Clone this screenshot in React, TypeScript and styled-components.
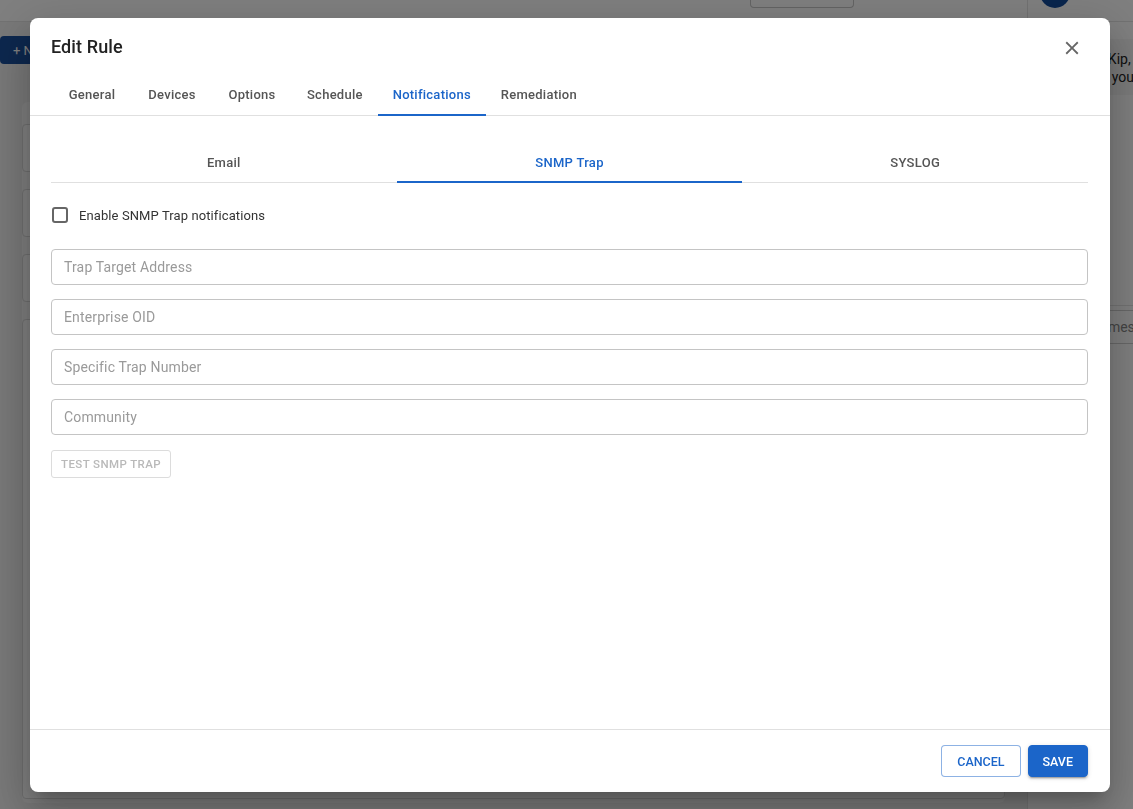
import React from "react";
import styled, { createGlobalStyle } from "styled-components";

const GlobalStyle = createGlobalStyle`
  html, body {
    margin: 0;
    padding: 0;
    height: 100%;
    overflow: hidden;
    font-family: Roboto, "Liberation Sans", Arial, sans-serif;
    background: #f0f0f0;
  }
  * { box-sizing: border-box; }
`;

const BLUE = "#1b65c9";

/* ---------- background app (dimmed behind the dialog) ---------- */

const AppShell = styled.div`
  display: flex;
  height: 100vh;
  width: 100vw;
`;

const Main = styled.div`
  flex: 1;
  display: flex;
  flex-direction: column;
`;

const TopBar = styled.div`
  height: 22px;
  background: #ffffff;
  border-bottom: 1px solid #e4e4e4;
  display: flex;
  align-items: flex-end;
  justify-content: flex-end;
  padding: 0 173px 0 0;
`;

const TopSelect = styled.div`
  width: 104px;
  height: 14px;
  border: 1px solid #c8c8c8;
  border-top: none;
  border-radius: 0 0 4px 4px;
  margin-bottom: 13px;
`;

const Toolbar = styled.div`
  height: 80px;
  padding: 14px 0 0;
`;

const NewButton = styled.div`
  width: 110px;
  height: 28px;
  background: #1a4f9c;
  color: #fff;
  border-radius: 4px;
  font-size: 13px;
  display: flex;
  align-items: center;
  padding-left: 13px;
`;

const ListCard = styled.div`
  flex: 1;
  margin: 0 22px 6px 22px;
  background: #fafafa;
  border-radius: 6px;
  padding: 22px 0 0;
  display: flex;
  flex-direction: column;
  gap: 17px;
`;

const ListRow = styled.div<{ $tall?: boolean }>`
  height: ${(p) => (p.$tall ? "480px" : "48px")};
  border: 1px solid #dcdcdc;
  border-radius: 4px;
  background: #fff;
`;

const ChatPanel = styled.div`
  width: 106px;
  background: #ffffff;
  border-left: 1px solid #e4e4e4;
  display: flex;
  flex-direction: column;
`;

const ChatHeader = styled.div`
  height: 22px;
  border-bottom: 1px solid #e4e4e4;
  padding-left: 12px;
  overflow: hidden;
`;

const Avatar = styled.div`
  width: 30px;
  height: 30px;
  border-radius: 50%;
  background: #124a9a;
  margin-top: -22px;
`;

const Bubble = styled.div`
  margin-top: 17px;
  height: 56px;
  background: #f6f6f6;
  padding: 11px 0 0 63px;
  font-size: 14px;
  line-height: 18px;
  color: #222;
  white-space: nowrap;
  overflow: hidden;
`;

const ChatInputWrap = styled.div`
  margin-top: 210px;
  padding: 0 0 0 8px;
  border-top: 1px solid #e4e4e4;
  height: 42px;
  display: flex;
  align-items: center;
`;

const ChatInput = styled.div`
  flex: 1;
  height: 34px;
  border: 1px solid #cfcfcf;
  border-right: none;
  border-radius: 4px 0 0 4px;
  font-size: 14px;
  color: #888;
  padding: 8px 0 0 39px;
  white-space: nowrap;
  overflow: hidden;
`;

/* ---------- dialog ---------- */

const Backdrop = styled.div`
  position: fixed;
  inset: 0;
  background: rgba(0, 0, 0, 0.5);
  display: flex;
  align-items: flex-start;
  justify-content: flex-start;
  padding: 18px 0 0 30px;
`;

const Dialog = styled.div`
  width: 1080px;
  height: 774px;
  background: #fff;
  border-radius: 8px;
  box-shadow: 0 11px 15px -7px rgba(0, 0, 0, 0.2),
    0 24px 38px 3px rgba(0, 0, 0, 0.14), 0 9px 46px 8px rgba(0, 0, 0, 0.12);
  display: flex;
  flex-direction: column;
  overflow: hidden;
`;

const Header = styled.div`
  display: flex;
  align-items: flex-start;
  justify-content: space-between;
  padding: 20px 22px 0 21px;
  height: 56px;
`;

const Title = styled.h2`
  margin: 0;
  font-size: 18px;
  line-height: 18px;
  font-weight: 500;
  color: #222;
  letter-spacing: 0.1px;
`;

const CloseButton = styled.button`
  border: none;
  background: none;
  padding: 0;
  width: 32px;
  height: 32px;
  margin-top: -6px;
  display: flex;
  align-items: center;
  justify-content: center;
  color: #666;
  cursor: pointer;
`;

const TopTabs = styled.div`
  display: flex;
  height: 42px;
  padding-left: 22px;
  border-bottom: 1px solid #e0e0e0;
`;

const TopTab = styled.div<{ $active?: boolean }>`
  display: flex;
  align-items: center;
  justify-content: center;
  min-width: 80px;
  padding: 0 15px;
  font-size: 13px;
  font-weight: 500;
  letter-spacing: 0.25px;
  color: ${(p) => (p.$active ? BLUE : "#555")};
  border-bottom: 2px solid ${(p) => (p.$active ? BLUE : "transparent")};
  margin-bottom: -1px;
`;

const Body = styled.div`
  flex: 1;
  padding: 20px 22px 0 21px;
  display: flex;
  flex-direction: column;
`;

const SubTabs = styled.div`
  display: grid;
  grid-template-columns: repeat(3, 1fr);
  border-bottom: 1px solid #e0e0e0;
`;

const SubTab = styled.div<{ $active?: boolean }>`
  height: 47px;
  padding-top: 7px;
  display: flex;
  align-items: center;
  justify-content: center;
  font-size: 13px;
  font-weight: 500;
  letter-spacing: 0.3px;
  color: ${(p) => (p.$active ? BLUE : "#555")};
  border-bottom: 2px solid ${(p) => (p.$active ? BLUE : "transparent")};
  margin-bottom: -1px;
`;

const CheckRow = styled.label`
  display: flex;
  align-items: center;
  gap: 11px;
  margin: 23px 0 0 1px;
  height: 18px;
  font-size: 13px;
  color: #333;
  letter-spacing: 0.1px;
`;

const CheckBox = styled.span`
  width: 16px;
  height: 16px;
  border: 2px solid #666;
  border-radius: 3px;
`;

const Fields = styled.div`
  display: flex;
  flex-direction: column;
  gap: 14px;
  margin-top: 25px;
`;

const Field = styled.div`
  height: 36px;
  border: 1px solid #c4c4c4;
  border-radius: 4px;
  display: flex;
  align-items: center;
  padding: 0 12px;
  font-size: 14px;
  color: #9a9a9a;
  letter-spacing: 0.15px;
`;

const TestButton = styled.button`
  align-self: flex-start;
  margin-top: 15px;
  height: 28px;
  padding: 0 9px;
  border: 1px solid #dcdcdc;
  border-radius: 3px;
  background: #fff;
  color: #b9b9b9;
  font-family: inherit;
  font-size: 11.5px;
  font-weight: 500;
  letter-spacing: 0.4px;
  text-transform: uppercase;
`;

const Footer = styled.div`
  height: 63px;
  border-top: 1px solid #e0e0e0;
  display: flex;
  align-items: flex-start;
  justify-content: flex-end;
  gap: 7px;
  padding: 15px 22px 0 0;
`;

const FooterButton = styled.button<{ $primary?: boolean }>`
  height: 32px;
  padding: 0 ${(p) => (p.$primary ? "14px" : "15px")};
  border-radius: 4px;
  font-family: inherit;
  font-size: 12.5px;
  font-weight: 500;
  letter-spacing: 0px;
  text-transform: uppercase;
  border: 1px solid ${(p) => (p.$primary ? BLUE : "rgba(27,101,201,0.5)")};
  background: ${(p) => (p.$primary ? BLUE : "#fff")};
  color: ${(p) => (p.$primary ? "#fff" : BLUE)};
  box-shadow: ${(p) =>
    p.$primary
      ? "0 3px 1px -2px rgba(0,0,0,0.2), 0 2px 2px 0 rgba(0,0,0,0.14), 0 1px 5px 0 rgba(0,0,0,0.12)"
      : "none"};
`;

const CloseIcon = () => (
  <svg width="22" height="22" viewBox="0 0 24 24" fill="currentColor">
    <path d="M19 6.41 17.59 5 12 10.59 6.41 5 5 6.41 10.59 12 5 17.59 6.41 19 12 13.41 17.59 19 19 17.59 13.41 12z" />
  </svg>
);

const mainTabs = ["General", "Devices", "Options", "Schedule", "Notifications", "Remediation"];
const subTabs = ["Email", "SNMP Trap", "SYSLOG"];
const fields = ["Trap Target Address", "Enterprise OID", "Specific Trap Number", "Community"];

const App = () => (
  <>
    <GlobalStyle />
    <AppShell>
      <Main>
        <TopBar>
          <TopSelect />
        </TopBar>
        <Toolbar>
          <NewButton>+ New</NewButton>
        </Toolbar>
        <ListCard>
          <ListRow />
          <ListRow />
          <ListRow />
          <ListRow $tall />
        </ListCard>
      </Main>
      <ChatPanel>
        <ChatHeader>
          <Avatar />
        </ChatHeader>
        <Bubble>
          Hi Kip,
          <br />
          Do you
        </Bubble>
        <ChatInputWrap>
          <ChatInput>Your message</ChatInput>
        </ChatInputWrap>
      </ChatPanel>
    </AppShell>

    <Backdrop>
      <Dialog>
        <Header>
          <Title>Edit Rule</Title>
          <CloseButton aria-label="close">
            <CloseIcon />
          </CloseButton>
        </Header>
        <TopTabs>
          {mainTabs.map((t) => (
            <TopTab key={t} $active={t === "Notifications"}>
              {t}
            </TopTab>
          ))}
        </TopTabs>
        <Body>
          <SubTabs>
            {subTabs.map((t) => (
              <SubTab key={t} $active={t === "SNMP Trap"}>
                {t}
              </SubTab>
            ))}
          </SubTabs>
          <CheckRow>
            <CheckBox />
            Enable SNMP Trap notifications
          </CheckRow>
          <Fields>
            {fields.map((f) => (
              <Field key={f}>{f}</Field>
            ))}
          </Fields>
          <TestButton disabled>Test SNMP Trap</TestButton>
        </Body>
        <Footer>
          <FooterButton>Cancel</FooterButton>
          <FooterButton $primary>Save</FooterButton>
        </Footer>
      </Dialog>
    </Backdrop>
  </>
);

export default App;
